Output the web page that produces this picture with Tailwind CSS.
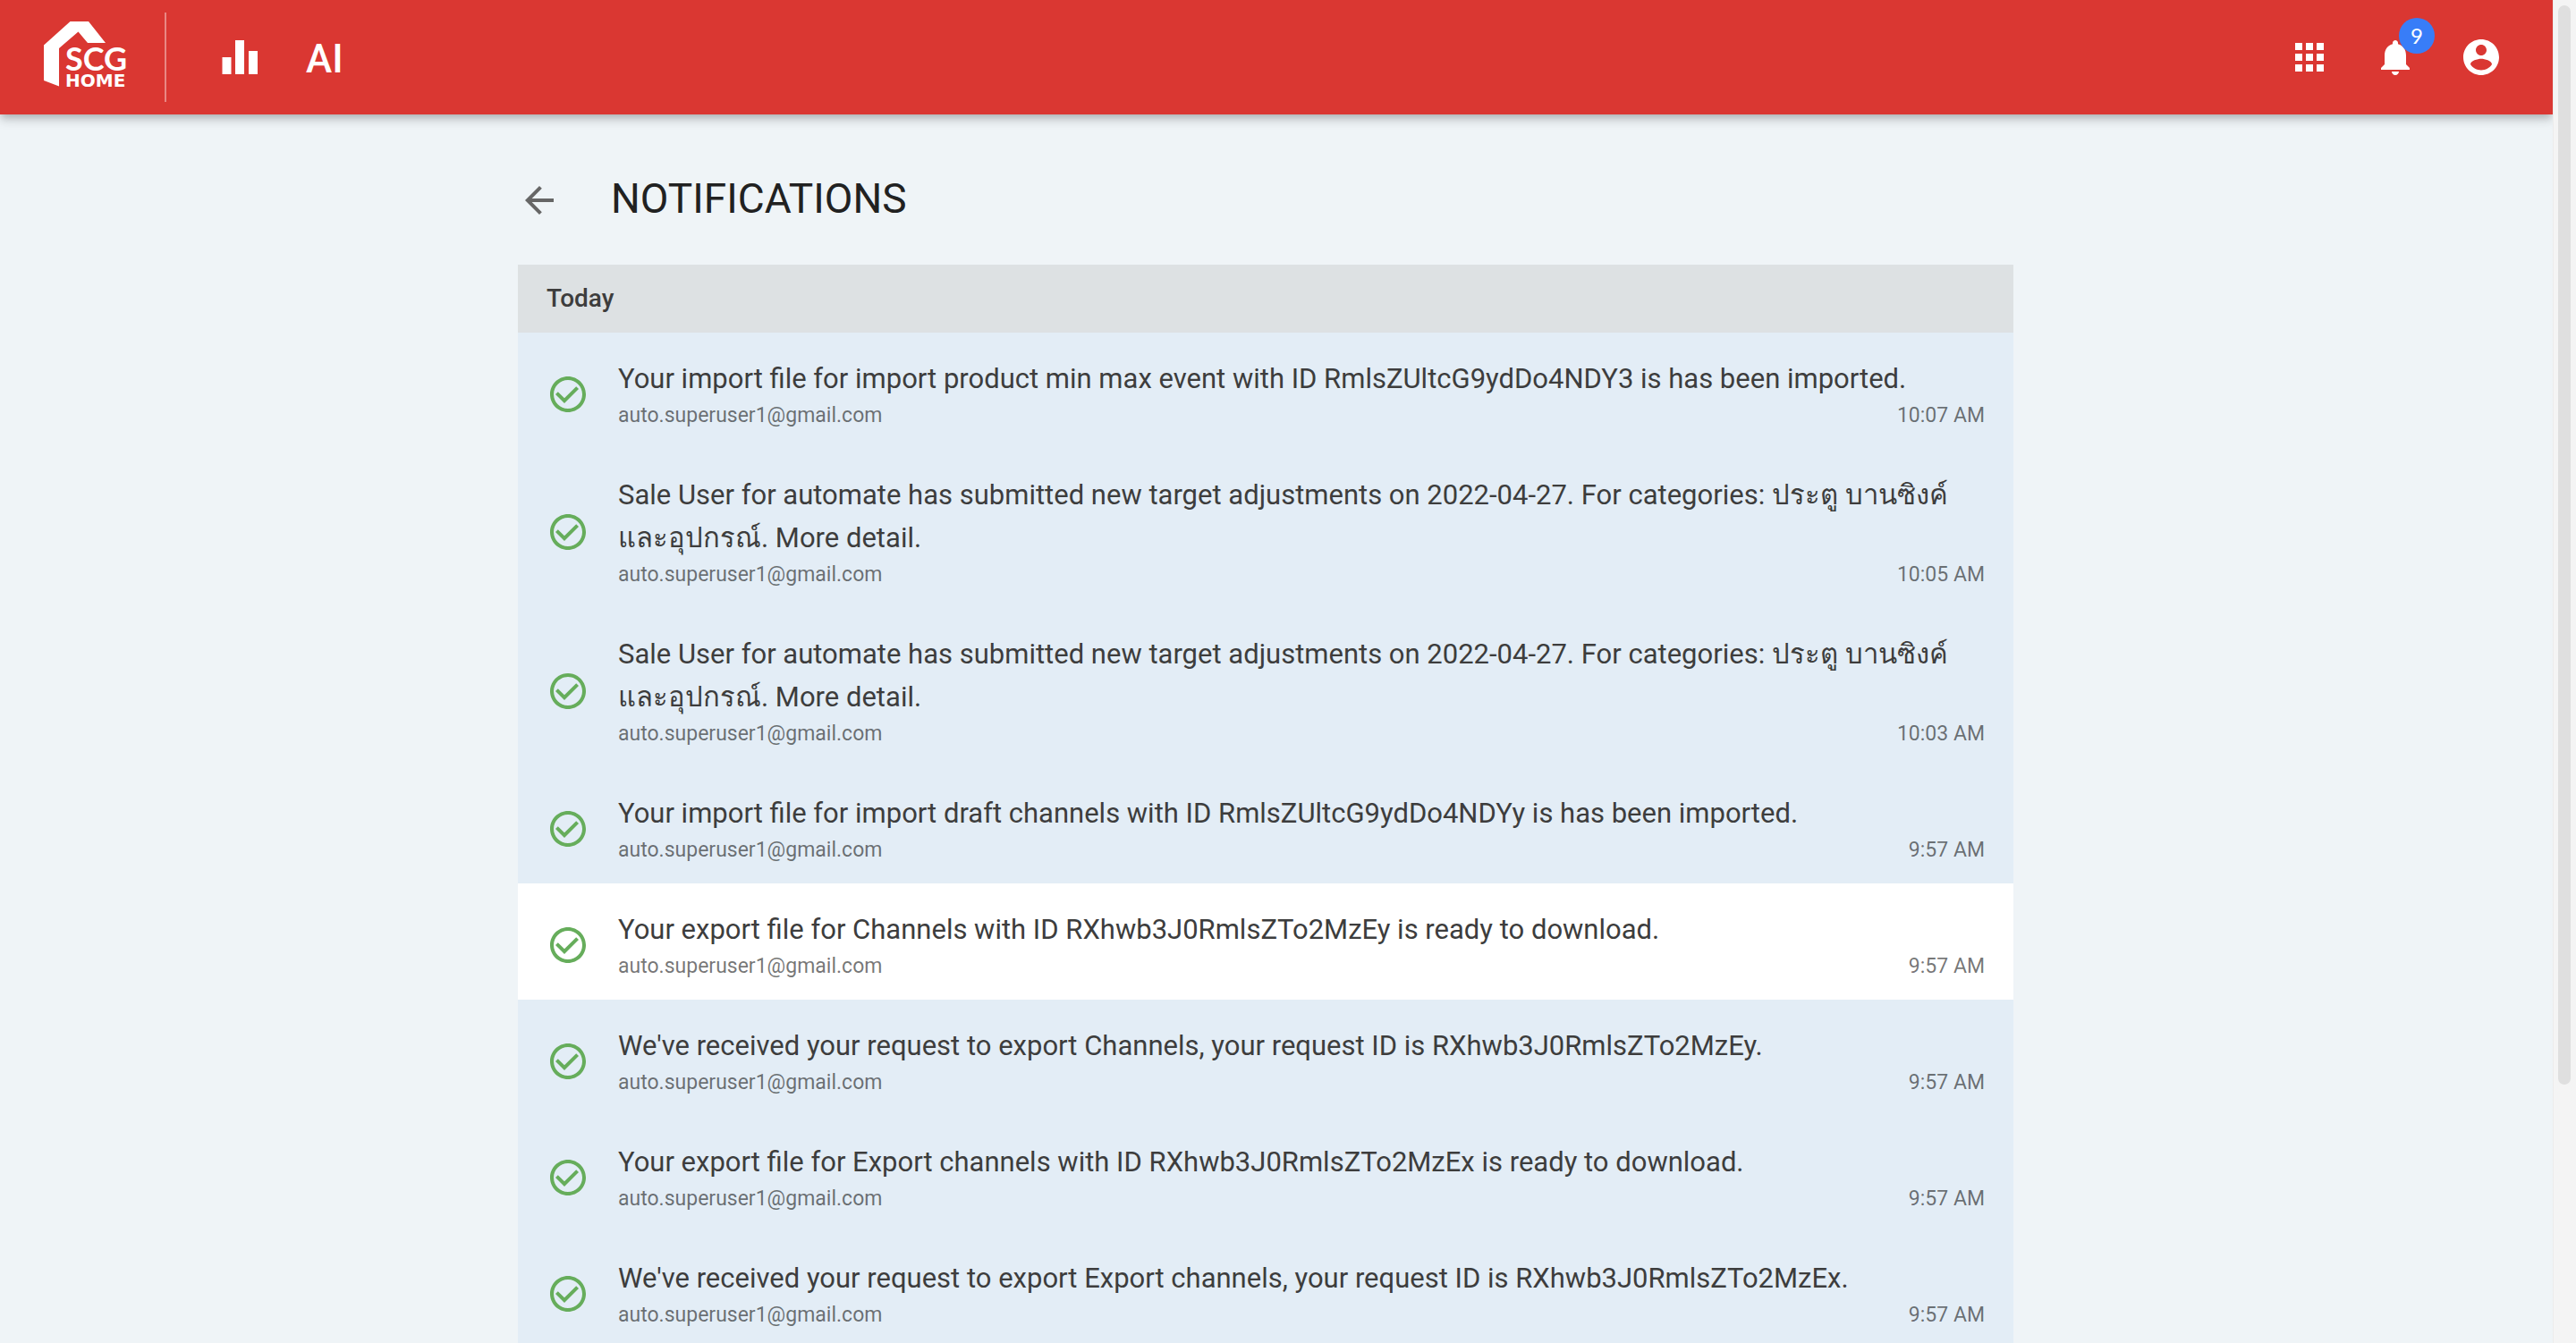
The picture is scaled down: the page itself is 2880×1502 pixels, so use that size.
<!DOCTYPE html>
<html lang="en">
<head>
<meta charset="utf-8">
<title>Notifications</title>
<script src="https://cdn.jsdelivr.net/npm/@tailwindcss/browser@4"></script>
</head>
<body class="flex h-screen overflow-hidden bg-[#eff4f7] font-[Roboto,'Noto_Sans',sans-serif] text-[#3d3d3d]">
<svg class="hidden">
  <symbol id="done" viewBox="0 0 24 24"><path d="M16.59 7.58 10 14.17l-3.59-3.58L5 12l5 5 8-8zM12 2C6.48 2 2 6.48 2 12s4.48 10 10 10 10-4.48 10-10S17.52 2 12 2m0 18c-4.42 0-8-3.58-8-8s3.58-8 8-8 8 3.58 8 8-3.58 8-8 8"/></symbol>
</svg>
<div class="flex h-screen min-w-0 flex-1 flex-col overflow-hidden">
  <header class="z-10 flex h-32 shrink-0 items-center bg-[#da3732] pr-8 pl-12 text-white shadow-[0_4px_8px_-2px_rgba(0,0,0,0.2),0_8px_10px_0_rgba(0,0,0,0.1),0_2px_20px_0_rgba(0,0,0,0.04)]">
    <a href="#" aria-label="SCG Home" class="mr-10">
      <svg class="h-20 w-24" viewBox="0 0 96 80" fill="#fff">
        <path d="M1 26.500 30.500 0H51l19 24H50L39.500 11.500 18 30v42.500L1 66z"/>
        <text x="25" y="55" class="font-[Lato] text-[36px] font-bold">SCG</text>
        <text x="25" y="73" class="font-['DejaVu_Sans'] text-[20px] font-bold">HOME</text>
      </svg>
    </a>
    <div class="h-[100px] w-0.5 bg-white/40"></div>
    <nav class="ml-[58px] flex items-center gap-[50px]">
      <a href="#" aria-label="Reports"><svg class="size-12" viewBox="0 0 48 48" fill="#fff"><path d="M4.500 24h10v19h-10zM19 5h10v38H19zM34 17h10v26H34z"/></svg></a>
      <a href="#" class="pt-1 text-[44px] leading-12 font-medium">AI</a>
    </nav>
    <div class="ml-auto flex">
      <button type="button" aria-label="Apps" class="p-6"><svg class="size-12" viewBox="0 0 24 24" fill="#fff"><path d="M4 8h4V4H4zm6 12h4v-4h-4zm-6 0h4v-4H4zm0-6h4v-4H4zm6 0h4v-4h-4zm6-10v4h4V4zm-6 4h4V4h-4zm6 6h4v-4h-4zm0 6h4v-4h-4z"/></svg></button>
      <button type="button" aria-label="Notifications" class="relative p-6"><svg class="size-12" viewBox="0 0 24 24" fill="#fff"><path d="M12 22c1.100 0 2-.9 2-2h-4c0 1.100.89 2 2 2m6-6v-5c0-3.070-1.640-5.640-4.500-6.320V4c0-.83-.67-1.500-1.500-1.500s-1.500.67-1.500 1.500v.68C7.630 5.360 6 7.920 6 11v5l-2 2v1h16v-1z"/></svg>
        <span class="absolute top-1 right-1 flex size-10 items-center justify-center rounded-full bg-[#387df8] font-[Lato] text-2xl">9</span></button>
      <button type="button" aria-label="Account" class="p-6"><svg class="size-12" viewBox="0 0 24 24" fill="#fff"><path d="M12 2C6.480 2 2 6.480 2 12s4.480 10 10 10 10-4.480 10-10S17.520 2 12 2m0 3c1.660 0 3 1.340 3 3s-1.340 3-3 3-3-1.340-3-3 1.340-3 3-3m0 14.200c-2.500 0-4.710-1.280-6-3.220.03-1.990 4-3.080 6-3.080 1.990 0 5.970 1.090 6 3.080-1.290 1.940-3.500 3.220-6 3.220"/></svg></button>
    </div>
  </header>
  <main class="pr-6">
    <div class="mx-auto max-w-[1672px]">
      <div class="flex h-[168px] items-center gap-14 pt-6">
        <button type="button" aria-label="Back"><svg class="size-12" viewBox="0 0 24 24" fill="#666"><path d="M20 11H7.830l5.590-5.590L12 4l-8 8 8 8 1.410-1.410L7.830 13H20z"/></svg></button>
        <h1 class="pb-1 text-[46px] leading-[60px] text-[#212121]">NOTIFICATIONS</h1>
      </div>
      <section>
        <h2 class="flex h-[76px] items-center bg-[#dde1e3] px-8 text-[28px] font-medium">Today</h2>
        <ul id="list"></ul>
      </section>
    </div>
  </main>
</div>
<aside aria-hidden="true" class="h-screen w-[26px] shrink-0 border-l border-[#ececec] bg-[#f4f4f4] py-1.5 pl-[5px]">
  <div class="h-[81%] w-3.5 rounded-full bg-[#dfdfdf]"></div>
</aside>
<script>
const sale = 'Sale User for automate has submitted new target adjustments on 2022-04-27. For categories: ประตู บานซิงค์ และอุปกรณ์. More detail.';
const items = [
  ['Your import file for import product min max event with ID RmlsZUltcG9ydDo4NDY3 is has been imported.', '10:07 AM'],
  [sale, '10:05 AM'],
  [sale, '10:03 AM'],
  ['Your import file for import draft channels with ID RmlsZUltcG9ydDo4NDYy is has been imported.', '9:57 AM'],
  ['Your export file for Channels with ID RXhwb3J0RmlsZTo2MzEy is ready to download.', '9:57 AM', true],
  ["We've received your request to export Channels, your request ID is RXhwb3J0RmlsZTo2MzEy.", '9:57 AM'],
  ['Your export file for Export channels with ID RXhwb3J0RmlsZTo2MzEx is ready to download.', '9:57 AM'],
  ["We've received your request to export Export channels, your request ID is RXhwb3J0RmlsZTo2MzEx.", '9:57 AM'],
];
document.getElementById('list').innerHTML = items.map(([text, time, read]) => `
  <li class="flex items-center gap-8 px-8 pt-7 pb-5 ${read ? 'bg-white' : 'bg-[#e3edf6]'}">
    <svg class="size-12 shrink-0" fill="#66ad5b"><use href="#done"/></svg>
    <div class="min-w-0 flex-1">
      <p class="text-[31px] leading-12">${text}</p>
      <div class="flex justify-between text-[23px] leading-[34px] text-black/55"><span>auto.superuser1@gmail.com</span><time>${time}</time></div>
    </div>
  </li>`).join('');
</script>
</body>
</html>
